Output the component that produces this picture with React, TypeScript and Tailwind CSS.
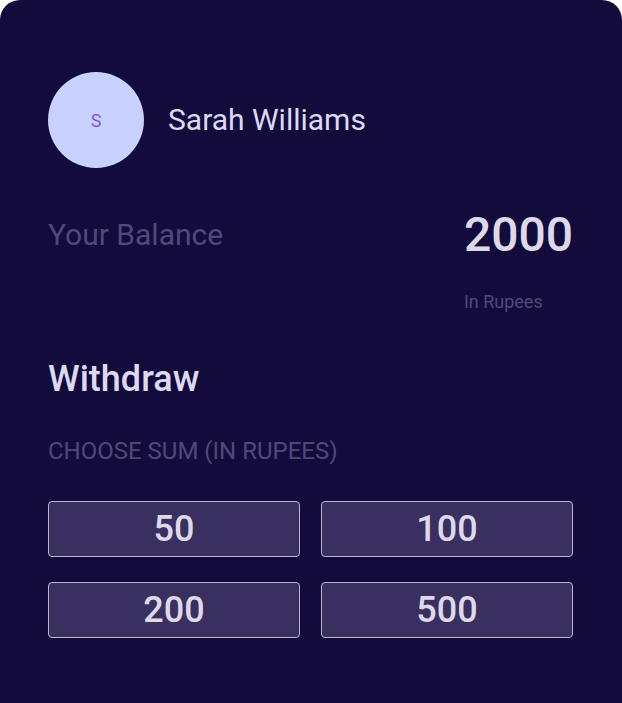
const amounts = [50, 100, 200, 500]

export default function App() {
  return (
    <div className="w-full min-h-[703px] bg-white" style={{ fontFamily: 'Roboto, "Noto Sans", sans-serif' }}>
      <div className="w-[622px] min-h-[703px] bg-[#140b3d] rounded-t-[20px] pl-12 pr-[49px] pt-[72px] pb-10">
        <div className="flex items-center gap-6">
          <div className="w-24 h-24 rounded-full bg-[#c9d1ff] flex items-center justify-center text-[18px] text-[#7a58ee]">S</div>
          <h2 className="text-[30px] leading-8 text-[#dcdaf0]">Sarah Williams</h2>
        </div>

        <div className="mt-[43px] flex justify-between items-start">
          <p className="text-[30px] leading-[48px] text-[#514879]">Your Balance</p>
          <div>
            <p className="text-[48px] leading-[48px] font-medium text-[#dcd9ea]">2000</p>
            <p className="mt-[31px] text-[18px] leading-6 text-[#514879]">In Rupees</p>
          </div>
        </div>

        <h3 className="mt-[45px] text-[36px] leading-10 font-medium text-[#dcdaf0]">Withdraw</h3>
        <p className="mt-[36px] text-[24px] leading-8 uppercase text-[#514879]">Choose sum (in rupees)</p>

        <div className="mt-[34px] grid grid-cols-2 gap-x-[21px] gap-y-[25px]">
          {amounts.map((a) => (
            <button
              key={a}
              className="h-14 rounded border border-[#bbb6cc] bg-[#3a3060] text-[36px] font-medium text-[#dcd9ea] flex items-center justify-center"
            >
              {a}
            </button>
          ))}
        </div>
      </div>
    </div>
  )
}
